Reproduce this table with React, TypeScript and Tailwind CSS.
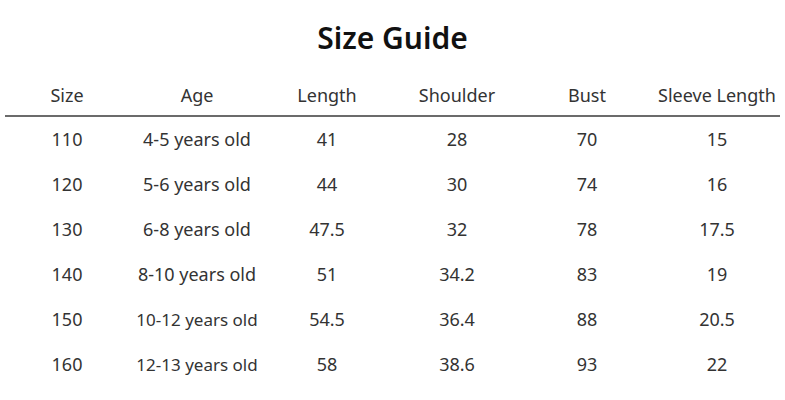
const headers = ["Size", "Age", "Length", "Shoulder", "Bust", "Sleeve Length"];

const rows: { cells: string[]; smallAge?: boolean }[] = [
  { cells: ["110", "4-5 years old", "41", "28", "70", "15"] },
  { cells: ["120", "5-6 years old", "44", "30", "74", "16"] },
  { cells: ["130", "6-8 years old", "47.5", "32", "78", "17.5"] },
  { cells: ["140", "8-10 years old", "51", "34.2", "83", "19"] },
  { cells: ["150", "10-12 years old", "54.5", "36.4", "88", "20.5"], smallAge: true },
  { cells: ["160", "12-13 years old", "58", "38.6", "93", "22"], smallAge: true },
];

export default function App() {
  return (
    <div
      className="w-[785px] h-[400px] bg-white text-[#222] overflow-hidden"
      style={{ fontFamily: '"Noto Sans", "Open Sans", sans-serif' }}
    >
      <div className="h-[75px] flex items-center justify-center">
        <h1 className="text-[30px] font-semibold text-[#111]">Size Guide</h1>
      </div>

      <div className="grid grid-cols-6 h-[40px] pl-[2px] w-[782px] items-center text-[18px] text-[#333]">
        {headers.map((h) => (
          <div key={h} className="text-center whitespace-nowrap">
            {h}
          </div>
        ))}
      </div>
      <div className="ml-[5px] w-[775px] h-[2px] bg-[#6b6b6b]" />

      {rows.map((r) => (
        <div
          key={r.cells[0]}
          className="grid grid-cols-6 h-[45px] pl-[2px] w-[782px] items-center text-[18px] text-[#333]"
        >
          {r.cells.map((c, i) => (
            <div
              key={i}
              className={
                i === 1 && r.smallAge
                  ? "text-center whitespace-nowrap text-[17px]"
                  : "text-center whitespace-nowrap"
              }
            >
              {c}
            </div>
          ))}
        </div>
      ))}
    </div>
  );
}
